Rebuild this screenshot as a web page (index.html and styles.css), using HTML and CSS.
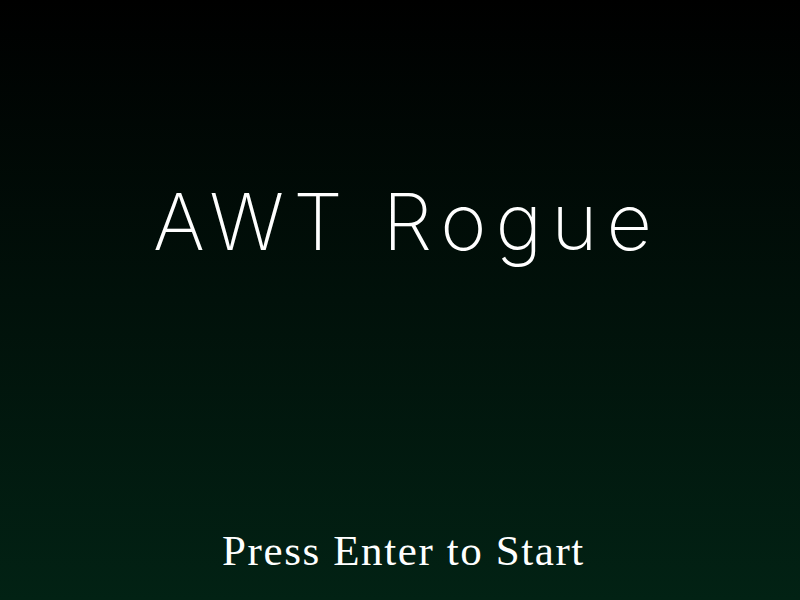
FILE: index.html
```html
<!DOCTYPE html>
<html>
<head>
<meta charset="utf-8">
<link rel="stylesheet" href="styles.css">
</head>
<body>
<div class="screen">
  <h1 class="title">AWT Rogue</h1>
  <p class="prompt">Press Enter to Start</p>
</div>
</body>
</html>
```
FILE: styles.css
```css
html, body {
  margin: 0;
  padding: 0;
}
.screen {
  width: 800px;
  height: 600px;
  background: linear-gradient(to bottom, #000000, #022214);
  display: flex;
  flex-direction: column;
  align-items: center;
  overflow: hidden;
}
.title {
  margin: 173px 0 0 0;
  padding-left: 14px;
  font-family: "Inter", "Lato", sans-serif;
  font-weight: 160;
  font-size: 79px;
  line-height: 96px;
  letter-spacing: 9px;
  color: #ffffff;
}
.prompt {
  margin: auto 0 24px 0;
  padding-left: 7px;
  font-family: "Liberation Serif", serif;
  font-size: 43px;
  line-height: 50px;
  letter-spacing: 1.6px;
  color: #ffffff;
}
```
